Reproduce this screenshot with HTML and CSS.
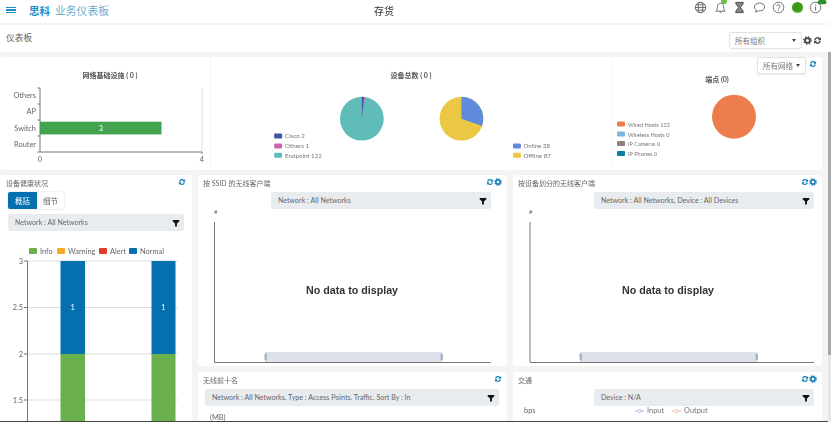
FILE: index.html
```html
<!DOCTYPE html>
<html lang="zh">
<head>
  <meta charset="UTF-8">
  <meta name="viewport" content="width=device-width, initial-scale=1.0">
  <title>思科 业务仪表板</title>
  <link rel="stylesheet" href="styles.css">
</head>
<body>
  <!-- shared icons -->
  <svg class="defs" width="0" height="0">
    <symbol id="i-refresh" viewBox="0 0 12 12">
      <path d="M1.6 5.2A4.5 4.5 0 0 1 9.3 2.9L10.6 1.6V5.6H6.6L8 4.2A2.7 2.7 0 0 0 3.4 5.6z"/>
      <path d="M10.4 6.8A4.5 4.5 0 0 1 2.7 9.1L1.4 10.4V6.4H5.4L4 7.8A2.7 2.7 0 0 0 8.6 6.4z"/>
    </symbol>
    <symbol id="i-gear" viewBox="0 0 12 12">
      <circle cx="6" cy="6" r="3.2" fill="none" stroke="currentColor" stroke-width="2.4"/>
      <circle cx="6" cy="6" r="4.9" fill="none" stroke="currentColor" stroke-width="1.8" stroke-dasharray="1.9 1.95"/>
    </symbol>
    <symbol id="i-filter" viewBox="0 0 12 12">
      <path d="M1 1.5H11V3.4L7.4 6.8V11.2H4.6V6.8L1 3.4z"/>
    </symbol>
  </svg>

  <div class="page">
    <header class="topbar">
      <div class="menu"><span></span><span></span><span></span></div>
      <span class="brand">思科</span>
      <span class="product">业务仪表板</span>
      <span class="page-name">存货</span>
      <div class="top-icons">
        <svg class="ti" viewBox="0 0 14 14"><circle cx="7" cy="7" r="5.6"/><ellipse cx="7" cy="7" rx="2.5" ry="5.6"/><path d="M1.4 7H12.6M2.2 4.2H11.8M2.2 9.8H11.8"/></svg>
        <span class="bell-wrap">
          <svg class="ti" viewBox="0 0 14 14"><path d="M2 11C3.4 9.8 3.6 8.4 3.6 6.4 3.6 4 5 2.6 7 2.6S10.4 4 10.4 6.4C10.4 8.4 10.6 9.8 12 11zM5.8 11.4A1.3 1.3 0 0 0 8.2 11.4"/></svg>
          <i class="bell-badge"></i>
        </span>
        <svg class="ti glass" viewBox="0 0 14 14"><path d="M3 1.5H11V3L8 7 11 11V12.5H3V11L6 7 3 3z"/></svg>
        <svg class="ti" viewBox="0 0 14 14"><path d="M7 2.2C3.8 2.2 1.6 4 1.6 6.4 1.6 7.8 2.4 9 3.6 9.7L2.8 12 5.6 10.5C9.6 11.1 12.4 9.2 12.4 6.4 12.4 4 10.2 2.2 7 2.2z"/></svg>
        <svg class="ti" viewBox="0 0 14 14"><circle cx="7" cy="7" r="5.7"/><path d="M5.3 5.6C5.3 3.6 8.8 3.6 8.8 5.5 8.8 6.8 7 6.8 7 8.4M7 9.5V10.5"/></svg>
        <span class="status-dot"></span>
        <span class="info-wrap">
          <svg class="ti" viewBox="0 0 14 14"><circle cx="7" cy="7" r="5.7"/><path d="M7 3.6V4.6M7 6V10.4"/></svg>
          <svg class="cloud" viewBox="0 0 12 10"><path d="M3 9A2.4 2.4 0 0 1 2.8 4.2 3.4 3.4 0 0 1 9.2 3.8 2.6 2.6 0 0 1 9 9z"/></svg>
        </span>
      </div>
    </header>

    <section class="subbar">
      <span class="crumb">仪表板</span>
      <div class="sub-tools">
        <div class="dropdown org">所有组织<i class="caret"></i></div>
        <svg class="ico dark"><use href="#i-gear"/></svg>
        <svg class="ico dark"><use href="#i-refresh"/></svg>
      </div>
    </section>

    <section class="card summary">
      <div class="summary-part first">
        <div class="part-title">网络基础设施 ( 0 )</div>
        <svg class="chart" viewBox="0 80 210 90">
          <path class="grid" d="M202 88V152"/>
          <path class="axis" d="M40 88V152H202M37.5 88H40M37.5 104H40M37.5 120H40M37.5 136H40M37.5 152H40M202 152V154"/>
          <rect x="40" y="121.7" width="121.5" height="12.7" fill="#43a34e"/>
          <g class="lbl end">
            <text x="36" y="98">Others</text>
            <text x="36" y="114">AP</text>
            <text x="36" y="130.5">Switch</text>
            <text x="36" y="146.5">Router</text>
          </g>
          <g class="lbl mid">
            <text x="40" y="162">0</text>
            <text x="202" y="162">4</text>
            <text x="101" y="130.5" fill="#fff">3</text>
          </g>
        </svg>
      </div>
      <div class="summary-part second">
        <div class="part-title">设备总数 ( 0 )</div>
        <svg class="chart" viewBox="210 80 402 90">
          <circle cx="361.6" cy="118.7" r="22" fill="#5fbcb9"/>
          <path d="M361.6 118.7V96.7A22 22 0 0 1 363.8 96.8z" fill="#3a55a5"/>
          <path d="M361.6 118.7L363.8 96.8A22 22 0 0 1 364.9 97z" fill="#c866ad"/>
          <circle cx="461.7" cy="118.7" r="22" fill="#ebc843"/>
          <path d="M461.7 118.7V96.7A22 22 0 0 1 482.4 126z" fill="#5f8bdc"/>
          <g class="legend">
            <rect x="273.5" y="133.5" width="8" height="5" rx="1" fill="#3a55a5"/><text x="284.5" y="138.5">Cisco 2</text>
            <rect x="273.5" y="143.5" width="8" height="5" rx="1" fill="#c866ad"/><text x="284.5" y="148.5">Others 1</text>
            <rect x="273.5" y="153" width="8" height="5" rx="1" fill="#5fbcb9"/><text x="284.5" y="158">Endpoint 122</text>
            <rect x="513.5" y="143.5" width="8" height="5" rx="1" fill="#5f8bdc"/><text x="524" y="148.5">Online 38</text>
            <rect x="513.5" y="153" width="8" height="5" rx="1" fill="#ebc843"/><text x="524" y="158">Offline 87</text>
          </g>
        </svg>
      </div>
      <div class="summary-part third">
        <div class="part-title">端点 (0)</div>
        <svg class="chart" viewBox="612 85 210 85">
          <circle cx="734" cy="118.7" r="22" fill="#ee7d4d"/>
          <g class="legend small">
            <rect x="617" y="123.5" width="8" height="5" rx="1" fill="#ee7d4d"/><text x="628" y="128.5">Wired Hosts 122</text>
            <rect x="617" y="133.5" width="8" height="5" rx="1" fill="#7cb8dc"/><text x="628" y="138.5">Wireless Hosts 0</text>
            <rect x="617" y="143" width="8" height="5" rx="1" fill="#8d7f7c"/><text x="628" y="148">IP Cameras 0</text>
            <rect x="617" y="153" width="8" height="5" rx="1" fill="#0f7fa6"/><text x="628" y="158">IP Phones 0</text>
          </g>
        </svg>
      </div>
      <div class="network-tools">
        <div class="dropdown net">所有网络<i class="caret"></i></div>
        <svg class="ico blue"><use href="#i-refresh"/></svg>
      </div>
    </section>

    <main class="board">
      <section class="card health">
        <div class="card-head"><h2>设备健康状况</h2><div class="card-icons"><svg class="ico blue"><use href="#i-refresh"/></svg></div></div>
        <div class="tabs"><span class="tab on">概括</span><span class="tab">细节</span></div>
        <div class="filter wide">Network : All Networks<svg class="ico"><use href="#i-filter"/></svg></div>
        <svg class="chart" viewBox="0 232 192 190">
          <g class="legend big">
            <rect x="29" y="248" width="8" height="6" rx="1" fill="#6ab04c"/><text x="40" y="254">Info</text>
            <rect x="57" y="248" width="8" height="6" rx="1" fill="#f9a825"/><text x="68" y="254">Warning</text>
            <rect x="99" y="248" width="8" height="6" rx="1" fill="#e53b2c"/><text x="110" y="254">Alert</text>
            <rect x="129" y="248" width="8" height="6" rx="1" fill="#0570b0"/><text x="140" y="254">Normal</text>
          </g>
          <path class="grid" d="M27.5 261H178M27.5 307.5H178M27.5 354H178M27.5 400H178"/>
          <path class="axis" d="M27.5 261V422M24 261H27.5M24 307.5H27.5M24 354H27.5M24 400H27.5"/>
          <rect x="60.5" y="261" width="24.5" height="93" fill="#0570b0"/>
          <rect x="60.5" y="354" width="24.5" height="68" fill="#6ab04c"/>
          <rect x="151.5" y="261" width="24" height="93" fill="#0570b0"/>
          <rect x="151.5" y="354" width="24" height="68" fill="#6ab04c"/>
          <g class="lbl end">
            <text x="23" y="263.5">3</text>
            <text x="23" y="310">2.5</text>
            <text x="23" y="356.5">2</text>
            <text x="23" y="402.5">1.5</text>
          </g>
          <g class="lbl mid" fill="#fff">
            <text x="72.7" y="309.5" fill="#fff">1</text>
            <text x="163.5" y="309.5" fill="#fff">1</text>
          </g>
        </svg>
      </section>

      <section class="card clients">
        <div class="card-head"><h2>按 SSID 的无线客户端</h2><div class="card-icons"><svg class="ico blue"><use href="#i-refresh"/></svg><svg class="ico blue"><use href="#i-gear"/></svg></div></div>
        <div class="filter mid-filter">Network : All Networks<svg class="ico"><use href="#i-filter"/></svg></div>
        <svg class="chart" viewBox="198 209 309 157">
          <text class="hash" x="214" y="214">#</text>
          <path class="axis" d="M214.5 222V362.5H490.5"/>
          <rect x="265" y="352" width="177" height="10" fill="#dde1ea"/>
          <rect x="264.5" y="353.5" width="2.5" height="7" rx="1" fill="#a9b4c4"/>
          <rect x="440.5" y="353.5" width="2.5" height="7" rx="1" fill="#a9b4c4"/>
          <text class="nodata" x="352" y="294">No data to display</text>
        </svg>
      </section>

      <section class="card clients">
        <div class="card-head"><h2>按设备划分的无线客户端</h2><div class="card-icons"><svg class="ico blue"><use href="#i-refresh"/></svg><svg class="ico blue"><use href="#i-gear"/></svg></div></div>
        <div class="filter">Network : All Networks, Device : All Devices<svg class="ico"><use href="#i-filter"/></svg></div>
        <svg class="chart" viewBox="513 209 309 157">
          <text class="hash" x="529" y="214">#</text>
          <path class="axis" d="M530 222V362.5H814"/>
          <rect x="580" y="352" width="177" height="10" fill="#dde1ea"/>
          <rect x="579.5" y="353.5" width="2.5" height="7" rx="1" fill="#a9b4c4"/>
          <rect x="755.5" y="353.5" width="2.5" height="7" rx="1" fill="#a9b4c4"/>
          <text class="nodata" x="668" y="294">No data to display</text>
        </svg>
      </section>

      <section class="card lower">
        <div class="card-head"><h2>无线前十名</h2><div class="card-icons"><svg class="ico blue"><use href="#i-refresh"/></svg></div></div>
        <div class="filter full">Network : All Networks. Type : Access Points. Traffic. Sort By : In<svg class="ico"><use href="#i-filter"/></svg></div>
        <div class="unit mb">(MB)</div>
      </section>

      <section class="card lower">
        <div class="card-head"><h2>交通</h2><div class="card-icons"><svg class="ico blue"><use href="#i-refresh"/></svg><svg class="ico blue"><use href="#i-gear"/></svg></div></div>
        <div class="filter">Device : N/A<svg class="ico"><use href="#i-filter"/></svg></div>
        <div class="traffic-row">
          <span class="unit">bps</span>
          <span class="series"><svg class="marker in" viewBox="0 0 10 6"><path d="M0 3H2.5M7.5 3H10M5 .8L7.2 3 5 5.2 2.8 3z"/></svg>Input</span>
          <span class="series"><svg class="marker out" viewBox="0 0 10 6"><path d="M0 3H2.5M7.5 3H10M5 .8L7.2 3 5 5.2 2.8 3z"/></svg>Output</span>
        </div>
      </section>
    </main>
  </div>

  <div class="scrollbar"><div class="thumb"></div></div>
</body>
</html>
```
FILE: styles.css
```css
/* ---- page frame ---- */
body {
  margin: 0; width: 831px; height: 422px; overflow: hidden;
  display: flex;
  background: #f4f4f4; color: #555;
  font-family: "Lato", "Noto Sans CJK SC", sans-serif;
  font-size: 8px;
}
.defs { position: absolute; }
.page { width: 828px; height: 421px; overflow: hidden; border-bottom: 1px solid #444; filter: blur(.3px); }
.scrollbar { width: 3px; height: 422px; box-sizing: border-box; padding-top: 52px; background: linear-gradient(#fff 52px, #e6e6e6 52px); }
.thumb { height: 303px; background: #a8a8a8; }

/* top bar */
.topbar { height: 23px; background: #fff; display: flex; align-items: center; padding-left: 6px; position: relative; }
.menu { width: 10px; display: flex; flex-direction: column; gap: 1.5px; margin-right: 13px; padding-bottom: 3px; }
.menu span { height: 1.2px; background: #1b8cc8; }
.brand { font-size: 10.5px; font-weight: 700; color: #1b8cc8; margin-right: 5px; padding-bottom: 3px; }
.product { font-size: 10.8px; color: #62aed3; padding-bottom: 3px; }
.page-name { position: absolute; left: 374px; top: 3px; font-size: 10px; color: #333; }
.top-icons { margin-left: auto; display: flex; align-items: center; width: 134px; padding-bottom: 8px; }
.ti { width: 13px; height: 13px; fill: none; stroke: #666; stroke-width: 1; display: block; }
.top-icons > * { margin-right: 6.5px; flex: none; }
.bell-wrap, .info-wrap { position: relative; display: block; }
.bell-badge { position: absolute; right: 0; top: -2px; width: 6px; height: 5px; border-radius: 3px; background: #6fbf4a; }
.glass { stroke: #444; fill: #888; }
.status-dot { width: 11px; height: 11px; border-radius: 50%; background: #3c9a1a; box-shadow: inset 0 -3px 0 -2px #8fce6a; }
.cloud { position: absolute; right: -5px; top: -4px; width: 10px; height: 8px; fill: #2f8f2c; }

/* breadcrumb row */
.subbar { height: 27px; margin-top: 2px; background: #fff; display: flex; align-items: center; padding: 0 6px 0 6px; }
.crumb { font-size: 8.7px; color: #666; padding-bottom: 3px; }
.sub-tools { margin-left: auto; display: flex; align-items: center; gap: 1px; padding-top: 3px; }
.dropdown {
  height: 17px; box-sizing: border-box; background: #fff; border: 1px solid #e2e2e2; border-radius: 2px;
  display: flex; align-items: center; justify-content: space-between; padding: 0 5px; font-size: 7.5px; color: #777;
}
.org { width: 73px; }
.net { width: 49px; box-shadow: 0 1px 2px rgba(0,0,0,.08); }
.caret { width: 0; height: 0; border: 2.2px solid transparent; border-top: 3px solid #444; border-bottom: 0; }
.ico { width: 8px; height: 8px; display: block; flex: none; }
.ico.dark { fill: #444; color: #444; width: 9px; height: 9px; }
.ico.blue { fill: #1a7fb8; color: #1a7fb8; }

/* cards */
.card { background: #fff; border-radius: 3px; position: relative; overflow: hidden; }
.summary { height: 113px; width: 822px; margin-top: 5px; display: flex; }
.summary-part { box-sizing: border-box; display: flex; flex-direction: column; }
.first { width: 210px; padding-top: 13px; }
.first .part-title { padding-left: 10px; }
.second { width: 402px; padding-top: 13px; border-left: 1px solid #f6f6f6; border-right: 1px solid #f6f6f6; }
.third { width: 210px; padding-top: 17px; }
.part-title { text-align: center; font-size: 7px; font-weight: 700; line-height: 10px; color: #555; }
.chart { display: block; flex: 1; min-height: 0; width: 100%; }
.first .chart, .second .chart { height: 90px; flex: none; }
.third .chart { height: 85px; flex: none; margin-top: -1px; }
.network-tools { position: absolute; right: 5px; top: 0; display: flex; align-items: center; gap: 3px; }
.network-tools .ico { margin-bottom: 3px; }

/* chart bits */
.axis { fill: none; stroke: #777; stroke-width: 1; }
.grid { fill: none; stroke: #ddd; stroke-width: 1; }
.lbl text { font-size: 7.4px; fill: #666; }
.lbl.end text { text-anchor: end; }
.lbl.mid text { text-anchor: middle; }
.lbl.mid text[fill="#fff"] { fill: #fff; }
.legend text { font-size: 6.2px; fill: #777; }
.legend.small text { font-size: 5.6px; }
.legend.big text { font-size: 7.4px; fill: #666; }
.hash { font-size: 6px; fill: #666; }
.nodata { font-family: "Liberation Sans", sans-serif; font-size: 10.7px; font-weight: 700; fill: #333; text-anchor: middle; }

/* lower grid */
.board {
  margin-top: 5px; width: 822px;
  display: grid; grid-template-columns: 192px 309px 309px; grid-template-rows: 191px 60px; gap: 6px;
}
.health { grid-row: 1 / span 2; padding: 0 8px; }
.health .chart { margin: 1px -8px 0; width: 192px; height: 190px; flex: none; }
.clients, .lower { display: flex; flex-direction: column; }
.card-head { height: 17px; display: flex; align-items: center; justify-content: space-between; padding: 0 5.5px 0 5px; }
.health .card-head { margin: 0 -8px; padding-left: 6px; padding-right: 6px; }
.card-head h2 { margin: 0; font-size: 7px; font-weight: 400; color: #666; padding-bottom: 2px; }
.card-icons { display: flex; padding-bottom: 4px; }
.tabs { display: flex; width: 56px; height: 17px; border-radius: 2px; box-shadow: 0 0 2px rgba(0,0,0,.2); }
.tab { width: 27px; display: flex; align-items: center; justify-content: center; font-size: 7.5px; color: #666; }
.tab.on { width: 29px; background: #0570b0; color: #fff; border-radius: 2px 0 0 2px; }

.filter {
  align-self: flex-end; width: 220px; height: 17px; box-sizing: border-box; flex: none;
  margin-right: 8px; padding: 0 4px 0 7px;
  background: #e9ecef; border-radius: 2px;
  display: flex; align-items: center; justify-content: space-between;
  font-size: 7.1px; color: #666;
}
.filter .ico { fill: #111; }
.mid-filter { margin-right: 16px; }
.filter.wide { width: 176px; margin: 5px 0 0; align-self: flex-start; }
.filter.full { width: 294px; align-self: flex-start; margin: 0 0 0 7px; }
.unit { font-size: 7.4px; color: #666; }
.mb { padding: 7px 0 0 12px; }
.traffic-row { display: flex; align-items: center; height: 9px; }
.traffic-row .unit { margin-left: 11px; width: 111px; }
.series { display: flex; align-items: center; font-size: 7.4px; color: #777; margin-right: 8px; }
.marker { width: 9px; height: 6px; margin-right: 3px; fill: none; stroke-width: .8; }
.marker.in { stroke: #7d9bd8; }
.marker.out { stroke: #e0946e; }
```
